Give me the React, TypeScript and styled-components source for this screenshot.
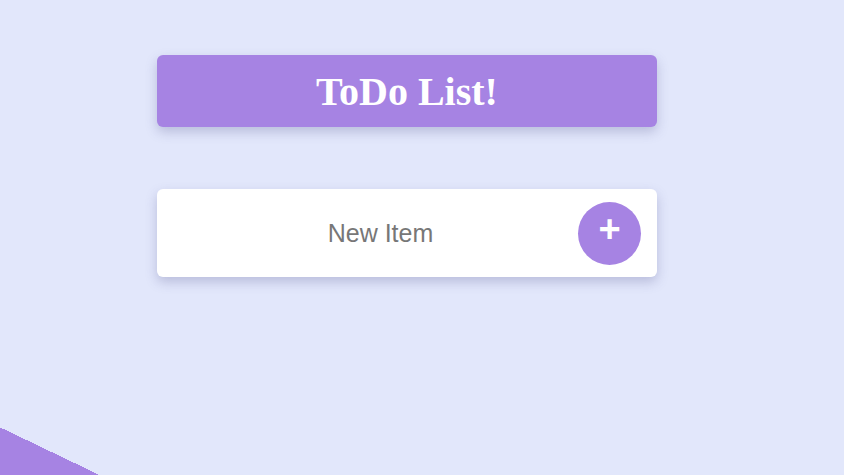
import styled, { createGlobalStyle } from "styled-components";
import { useState } from "react";

const GlobalStyle = createGlobalStyle`
    html, body {
        margin: 0;
        padding: 0;
    }
    body {
        font-family: "Liberation Sans", Arial, sans-serif;
    }
`

function App() {
    const [item, setItem] = useState("")

    return (
        <>
            <GlobalStyle />
            <Page>
                <Container>
                    <Heading>
                        <Title>ToDo List!</Title>
                    </Heading>
                    <Form onSubmit={e => e.preventDefault()}>
                        <ItemInput
                            type="text"
                            placeholder="New Item"
                            value={item}
                            onChange={e => setItem(e.target.value)}
                        />
                        <AddBtn type="submit">+</AddBtn>
                    </Form>
                </Container>
            </Page>
        </>
    )
}

export default App

const Page = styled.div`
    min-height: 100vh;
    box-sizing: border-box;
    padding: 55px 0 0 157px;
    background: linear-gradient(25.6deg, #a683e3 43px, #e2e7fb 43px);
`

const Container = styled.div`
    width: 500px;
    display: flex;
    flex-direction: column;
    gap: 62px;
`

const Heading = styled.div`
    height: 72px;
    display: flex;
    align-items: center;
    justify-content: center;
    background-color: #a683e3;
    border-radius: 6px;
    box-shadow: 0 5px 12px rgba(80, 80, 140, 0.28);
`

const Title = styled.h1`
    margin: 0;
    color: #ffffff;
    font-family: "Liberation Serif", "Times New Roman", serif;
    font-weight: bold;
    font-size: 40px;
`

const Form = styled.form`
    height: 88px;
    box-sizing: border-box;
    display: flex;
    align-items: center;
    padding: 0 16px 0 26px;
    background-color: #ffffff;
    border-radius: 6px;
    box-shadow: 0 5px 12px rgba(80, 80, 140, 0.28);
`

const ItemInput = styled.input`
    flex: 1;
    min-width: 0;
    border: none;
    outline: none;
    text-align: center;
    font-family: "Liberation Sans", Arial, sans-serif;
    font-size: 25px;
    color: #555;

    &::placeholder {
        color: #777;
    }
`

const AddBtn = styled.button`
    width: 63px;
    height: 63px;
    flex-shrink: 0;
    border: none;
    border-radius: 50%;
    background-color: #a683e3;
    color: #ffffff;
    font-family: "Liberation Sans", Arial, sans-serif;
    font-size: 38px;
    font-weight: bold;
    line-height: 1;
    padding: 0 0 8px 0;
    cursor: pointer;
`
